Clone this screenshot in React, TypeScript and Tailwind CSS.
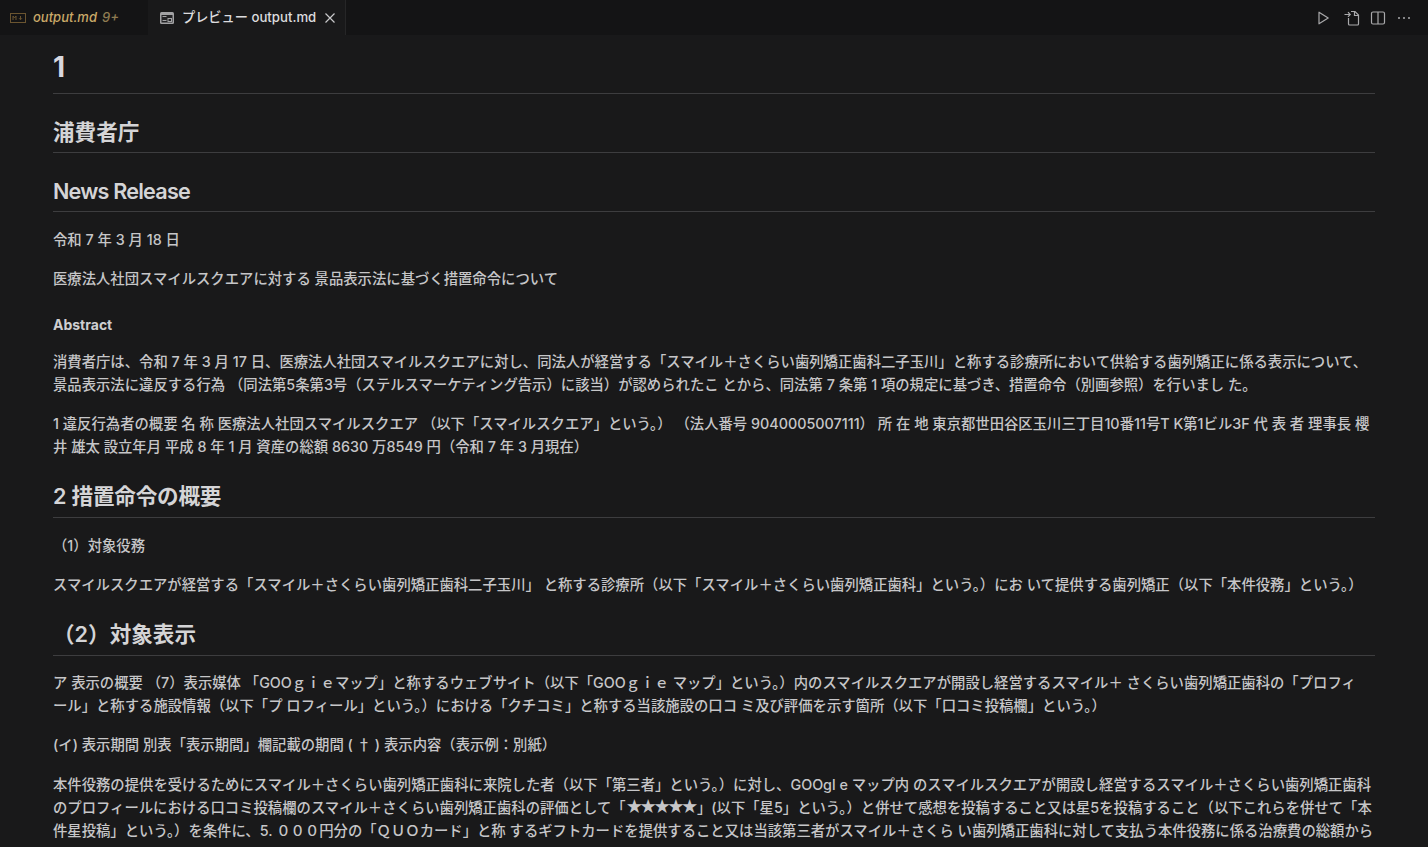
import React from "react";

const font = { fontFamily: '"Inter", "Noto Sans CJK JP", sans-serif' };

function MdIcon() {
  return (
    <svg width="16" height="16" viewBox="0 0 16 16" fill="none" className="shrink-0">
      <rect x="0.5" y="3.5" width="15" height="9" stroke="#6b5530" strokeWidth="1" />
      <path d="M3 10V6l1.5 2L6 6v4" stroke="#6b5530" strokeWidth="1" />
      <path d="M10.5 6v3.5M9 8.2l1.5 1.5L12 8.2" stroke="#6b5530" strokeWidth="1" />
    </svg>
  );
}

function PreviewIcon() {
  return (
    <svg width="16" height="16" viewBox="0 0 16 16" fill="none" className="shrink-0">
      <rect x="1" y="2" width="14" height="12" rx="1.5" fill="#a2a2a4" />
      <rect x="2.5" y="5" width="11" height="7.5" fill="#232325" />
      <rect x="3.5" y="6" width="4" height="1" fill="#a2a2a4" />
      <rect x="3.5" y="10" width="4" height="1" fill="#a2a2a4" />
      <rect x="9" y="8.5" width="3.5" height="3" stroke="#a2a2a4" strokeWidth="1" fill="none" />
    </svg>
  );
}

function Actions() {
  return (
    <div className="flex items-center text-[#a9a9ab] pr-[16px]">
      <svg width="16" height="16" viewBox="0 0 16 16" fill="none" stroke="currentColor" strokeWidth="1.2" className="mr-[12px]">
        <path d="M4 2.2v11.6L13.2 8z" strokeLinejoin="round" />
      </svg>
      <svg width="18" height="18" viewBox="0 0 18 18" fill="none" stroke="currentColor" strokeWidth="1.2" className="mr-[9px]">
        <path d="M8 2.5h4l3.5 3.5v9a1 1 0 0 1-1 1H6.5a1 1 0 0 1-1-1V9" />
        <path d="M11.5 2.5V6.5h4" />
        <path d="M1.5 5.5h5.5M5 3.2l2.2 2.3L5 7.8" />
      </svg>
      <svg width="16" height="16" viewBox="0 0 16 16" fill="none" stroke="currentColor" strokeWidth="1.2" className="mr-[10px]">
        <rect x="1.5" y="2" width="13" height="12" rx="1.5" />
        <path d="M8 2v12" />
      </svg>
      <svg width="16" height="16" viewBox="0 0 16 16" fill="currentColor">
        <circle cx="3" cy="8" r="1" />
        <circle cx="8" cy="8" r="1" />
        <circle cx="13" cy="8" r="1" />
      </svg>
    </div>
  );
}

function H2({ children, className = "" }: { children: React.ReactNode; className?: string }) {
  return (
    <h2 className={`text-[21.6px] leading-[27px] font-semibold text-[#d4d4d6] pb-[7px] border-b border-[#3d3d3f] mb-[16px] ${className}`}>
      {children}
    </h2>
  );
}

function P({ children, className = "" }: { children: React.ReactNode; className?: string }) {
  return <p className={`leading-[23px] whitespace-nowrap ${className}`}>{children}</p>;
}

export default function App() {
  return (
    <div style={font} className="h-[847px] w-[1428px] overflow-hidden bg-[#19191a] flex flex-col">
      <div className="h-[35px] shrink-0 bg-[#141415] flex items-center justify-between">
        <div className="flex h-full">
          <div className="w-[148px] flex items-center pl-[10px] gap-[7px] text-[13px] font-medium italic text-[#c9a968]">
            <MdIcon />
            <span>output.md</span>
            <span className="text-[#8f7c52] -ml-[2px]">9+</span>
          </div>
          <div className="w-[198px] flex items-center pl-[11px] pr-[7px] bg-[#19191a] border-r border-[#262627] text-[13.2px] font-medium text-[#dcdcde]">
            <PreviewIcon />
            <span className="ml-[7px] whitespace-nowrap">プレビュー output.md</span>
            <svg width="16" height="16" viewBox="0 0 16 16" fill="none" stroke="#c8c8ca" strokeWidth="1.2" className="ml-auto">
              <path d="M3.5 3.5l9 9M12.5 3.5l-9 9" />
            </svg>
          </div>
        </div>
        <Actions />
      </div>

      <div className="pl-[53px] pr-[53px] text-[14.35px] font-medium text-[#c6c6c8]">
        <h1 className="mt-[15px] text-[28px] leading-[34px] font-bold text-[#d8d8e0] pb-[9px] border-b border-[#3d3d3f]">1</h1>
        <H2 className="mt-[24px] !mb-0 !leading-[29px] !pb-[5px]">浦費者庁</H2>
        <H2 className="mt-[24px] tracking-[-0.8px] !leading-[29px] !pb-[5px]">News Release</H2>
        <P className="mb-[16px]">令和 7 年 3 月 18 日</P>
        <P>医療法人社団スマイルスクエアに対する 景品表示法に基づく措置命令について</P>
        <h4 className="mt-[26px] mb-[16px] leading-[18px] font-bold text-[14px] text-[#cfcfd1]">Abstract</h4>
        <P className="mb-[16px]">
          消費者庁は、令和 7 年 3 月 17 日、医療法人社団スマイルスクエアに対し、同法人が経営する「スマイル＋さくらい歯列矯正歯科二子玉川」と称する診療所において供給する歯列矯正に係る表示について、
          <br />
          景品表示法に違反する行為 （同法第5条第3号（ステルスマーケティング告示）に該当）が認められたこ とから、同法第 7 条第 1 項の規定に基づき、措置命令（別画参照）を行いまし た。
        </P>
        <P>
          1 違反行為者の概要 名 称 医療法人社団スマイルスクエア （以下「スマイルスクエア」という。） （法人番号 9040005007111） 所 在 地 東京都世田谷区玉川三丁目10番11号T K第1ビル3F 代 表 者 理事長 櫻
          <br />
          井 雄太 設立年月 平成 8 年 1 月 資産の総額 8630 万8549 円（令和 7 年 3 月現在）
        </P>
        <H2 className="mt-[25px] tracking-[-0.2px]">2 措置命令の概要</H2>
        <P className="mb-[16px]">（1）対象役務</P>
        <P>
          スマイルスクエアが経営する「スマイル＋さくらい歯列矯正歯科二子玉川」 と称する診療所（以下「スマイル＋さくらい歯列矯正歯科」という。）にお いて提供する歯列矯正（以下「本件役務」という。）
        </P>
        <H2 className="mt-[25px]">（2）対象表示</H2>
        <P className="mb-[15px] -mt-px">
          ア 表示の概要 （7）表示媒体 「GOOｇｉｅマップ」と称するウェブサイト（以下「GOOｇｉｅ マップ」という。）内のスマイルスクエアが開設し経営するスマイル＋ さくらい歯列矯正歯科の「プロフィ
          <br />
          ール」と称する施設情報（以下「プ ロフィール」という。）における「クチコミ」と称する当該施設の口コ ミ及び評価を示す箇所（以下「口コミ投稿欄」という。）
        </P>
        <P className="mb-[17px]">
          (イ) 表示期間 別表「表示期間」欄記載の期間 ( <span className="font-['Noto_Sans_CJK_JP']">†</span> ) 表示内容（表示例：別紙）
        </P>
        <P>
          本件役務の提供を受けるためにスマイル＋さくらい歯列矯正歯科に来院した者（以下「第三者」という。）に対し、GOOgl e マップ内 のスマイルスクエアが開設し経営するスマイル＋さくらい歯列矯正歯科
          <br />
          のプロフィールにおける口コミ投稿欄のスマイル＋さくらい歯列矯正歯科の評価として「<span className="text-[17px] leading-[20px] tracking-[-4px]">★★★★★</span>&thinsp;」(以下「星5」という。）と併せて感想を投稿すること又は星5を投稿すること（以下これらを併せて「本
          <br />
          件星投稿」という。）を条件に、5. ０００円分の「ＱＵＯカード」と称 するギフトカードを提供すること又は当該第三者がスマイル＋さくら い歯列矯正歯科に対して支払う本件役務に係る治療費の総額から
        </P>
      </div>
    </div>
  );
}
